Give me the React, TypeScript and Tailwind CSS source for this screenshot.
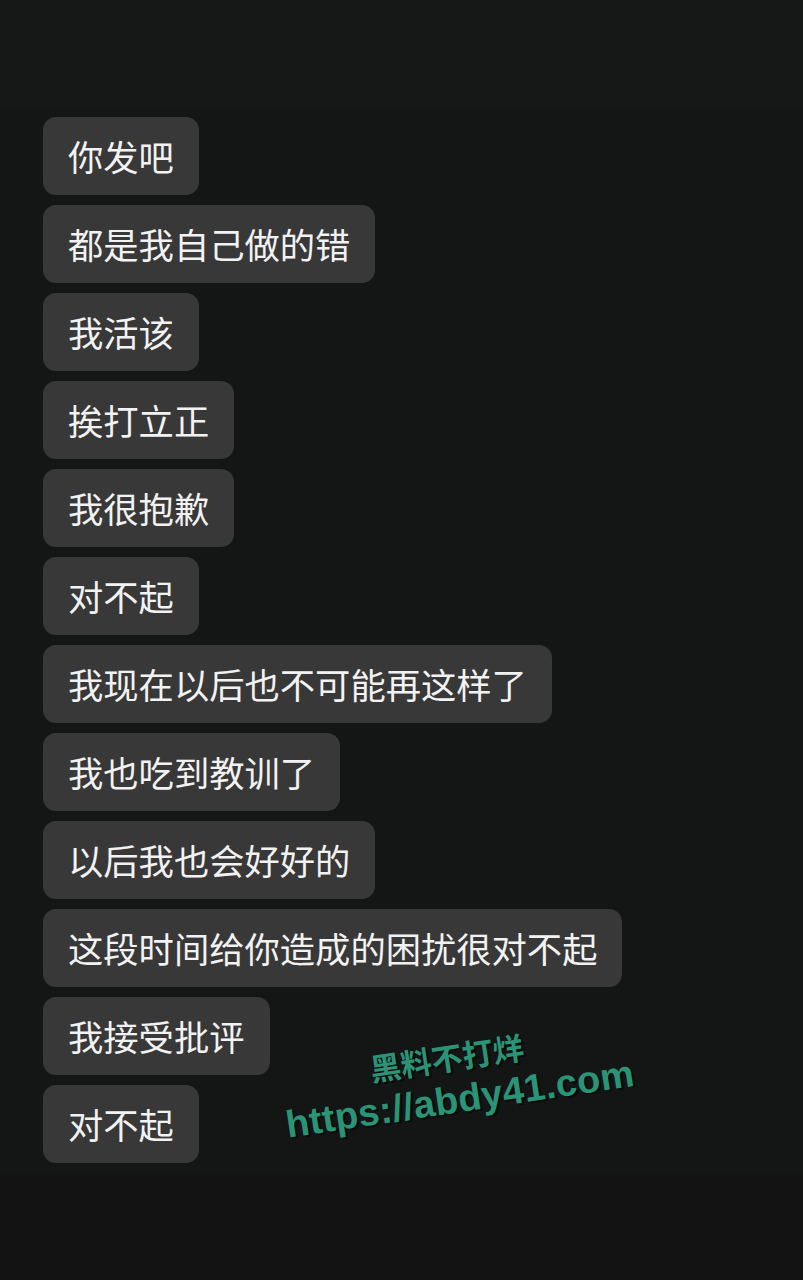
const messages = [
  '你发吧',
  '都是我自己做的错',
  '我活该',
  '挨打立正',
  '我很抱歉',
  '对不起',
  '我现在以后也不可能再这样了',
  '我也吃到教训了',
  '以后我也会好好的',
  '这段时间给你造成的困扰很对不起',
  '我接受批评',
  '对不起',
];

function Bubble({ text }: { text: string }) {
  return (
    <div className="w-fit h-[78px] flex items-center rounded-[13px] bg-[#383838] px-[25px] text-[35.3px] leading-none text-[#f2f2f2] font-['Noto_Sans_CJK_SC',sans-serif]">
      {text}
    </div>
  );
}

export default function App() {
  return (
    <div className="relative w-full h-[1280px] flex flex-col bg-[#141515] overflow-hidden">
      <div className="h-[108px] shrink-0 bg-[#161717]" />
      <div className="flex flex-col gap-[10px] px-[43px] pt-[9px] pb-[10px]">
        {messages.map((m, i) => (
          <Bubble key={i} text={m} />
        ))}
      </div>
      <div className="flex-1 bg-[#131313]" />

      {/* watermark */}
      <div className="absolute left-[272px] top-[1040px] w-[370px] -rotate-[8.5deg] flex flex-col items-center font-bold text-[#2a9477] [text-shadow:2px_2px_0_#0a0a0a] leading-none">
        <div className="text-[31px] font-['Noto_Sans_CJK_SC',sans-serif] -ml-[14px]">黑料不打烊</div>
        <div className="mt-[9px] text-[38px] tracking-[0.3px] font-['Liberation_Sans',sans-serif]">https://abdy41.com</div>
      </div>
    </div>
  );
}
